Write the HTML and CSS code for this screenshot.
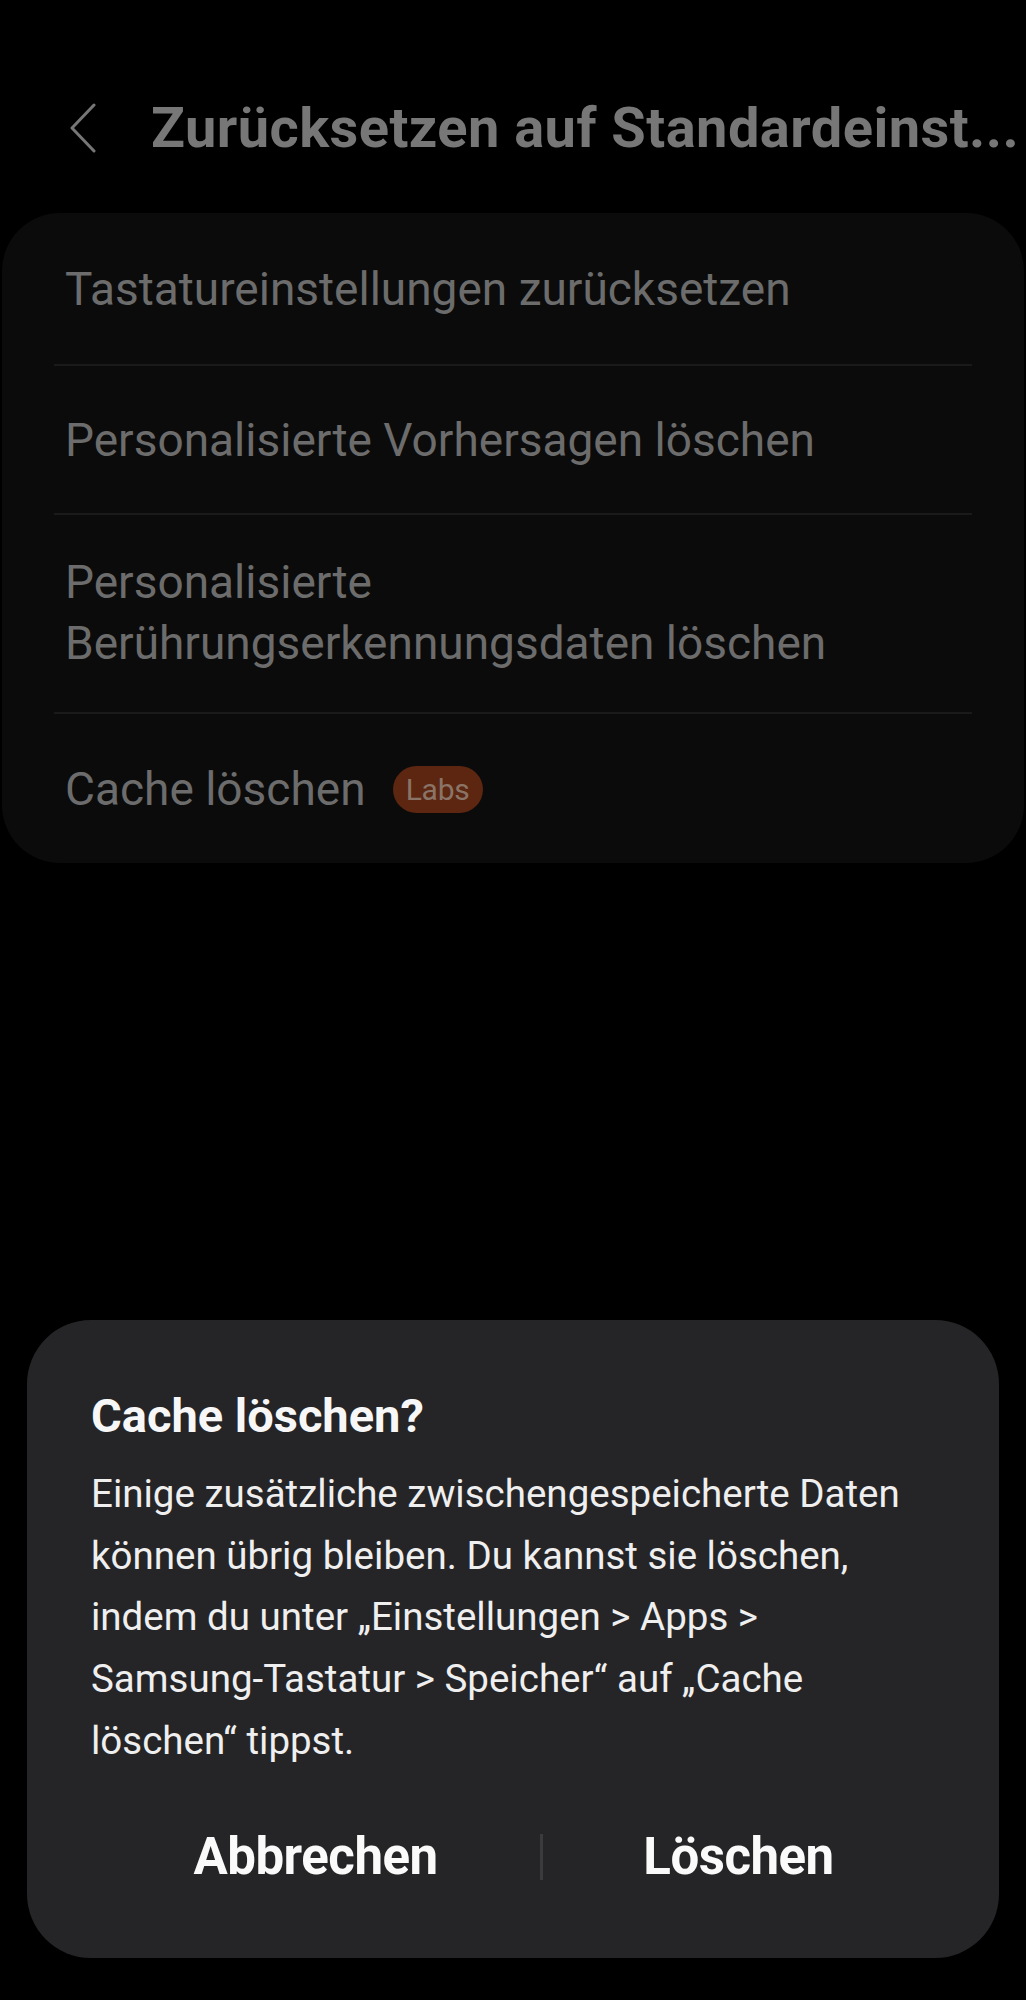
FILE: index.html
```html
<!DOCTYPE html>
<html lang="de">
<head>
<meta charset="utf-8">
<title>Zurücksetzen auf Standardeinstellungen</title>
<link rel="stylesheet" href="styles.css">
</head>
<body>
<div class="screen">
  <header class="appbar">
    <span class="back" aria-label="Zurück">
      <svg width="28" height="50" viewBox="0 0 28 50"><path d="M25 2 L3 25 L25 48" fill="none" stroke="#767676" stroke-width="3" stroke-linecap="round" stroke-linejoin="round"/></svg>
    </span>
    <h1 class="title">Zurücksetzen auf Standardeinst...</h1>
  </header>

  <section class="card">
    <div class="row">Tastatureinstellungen zurücksetzen</div>
    <div class="row">Personalisierte Vorhersagen löschen</div>
    <div class="row row-multi">Personalisierte<br>Berührungserkennungsdaten löschen</div>
    <div class="row">Cache löschen <span class="badge">Labs</span></div>
  </section>

  <div class="spacer"></div>

  <section class="dialog">
    <h2 class="dlg-title">Cache löschen?</h2>
    <p class="dlg-body">Einige zusätzliche zwischengespeicherte Daten<br>können übrig bleiben. Du kannst sie löschen,<br>indem du unter „Einstellungen &gt; Apps &gt;<br>Samsung-Tastatur &gt; Speicher“ auf „Cache<br>löschen“ tippst.</p>
    <div class="actions">
      <button class="btn btn-left">Abbrechen</button>
      <span class="sep"></span>
      <button class="btn btn-right">Löschen</button>
    </div>
  </section>
</div>
</body>
</html>
```

FILE: styles.css
```css
html, body {
  margin: 0;
  padding: 0;
  background: #000;
}
body {
  font-family: Roboto, "Noto Sans", "Liberation Sans", sans-serif;
  width: 1026px;
  height: 2000px;
  overflow: hidden;
}
.screen {
  display: flex;
  flex-direction: column;
  height: 2000px;
}
.appbar {
  display: flex;
  align-items: center;
  height: 80px;
  margin-top: 88px;
  padding-left: 69px;
  padding-right: 0;
}
.back {
  display: flex;
  width: 28px;
  flex: none;
}
.title {
  margin: 0 0 0 54px;
  font-size: 56px;
  font-weight: 700;
  color: #777;
  letter-spacing: 0.45px;
  white-space: nowrap;
}
.card {
  margin: 45px 2px 0;
  background: #0b0b0b;
  border-radius: 58px;
  padding: 0 52px;
}
.row {
  display: flex;
  align-items: center;
  min-height: 149px;
  padding: 2px 11px 0;
  box-sizing: border-box;
  font-size: 46px;
  line-height: 61px;
  color: #6c6c6c;
  letter-spacing: 0;
  border-top: 2px solid #1a1a1a;
}
.row:first-child {
  border-top: none;
  min-height: 151px;
}
.row:last-child {
  min-height: 151px;
}
.row-multi {
  display: block;
  padding-top: 37px;
  padding-bottom: 38px;
}
.badge {
  display: inline-flex;
  align-items: center;
  justify-content: center;
  margin-left: 27px;
  width: 90px;
  height: 47px;
  border-radius: 24px;
  background: #5c2610;
  color: #8a7468;
  font-size: 30px;
  letter-spacing: -0.3px;
}
.spacer {
  height: 457px;
  flex: none;
}
.dialog {
  margin: 0 27px;
  background: #252527;
  border-radius: 64px;
  padding: 66px 40px 0 64px;
  height: 638px;
  box-sizing: border-box;
}
.dlg-title {
  margin: 0;
  font-size: 47px;
  font-weight: 700;
  line-height: 60px;
  color: #f7f7f7;
  letter-spacing: 0;
}
.dlg-body {
  margin: 17px 0 0;
  font-size: 38.5px;
  line-height: 61.7px;
  color: #efefef;
  letter-spacing: 0;
  white-space: nowrap;
}
.actions {
  display: flex;
  align-items: center;
  height: 100px;
  margin-top: 35px;
  margin-right: 25px;
}
.btn {
  font-family: inherit;
  background: none;
  border: none;
  padding: 0;
  color: #fafafa;
  font-size: 51px;
  font-weight: 700;
  letter-spacing: -0.5px;
  text-align: center;
}
.btn-left {
  width: 449px;
}
.btn-right {
  flex: 1;
}
.sep {
  width: 3px;
  height: 46px;
  background: #3b3b3d;
  flex: none;
}
```
